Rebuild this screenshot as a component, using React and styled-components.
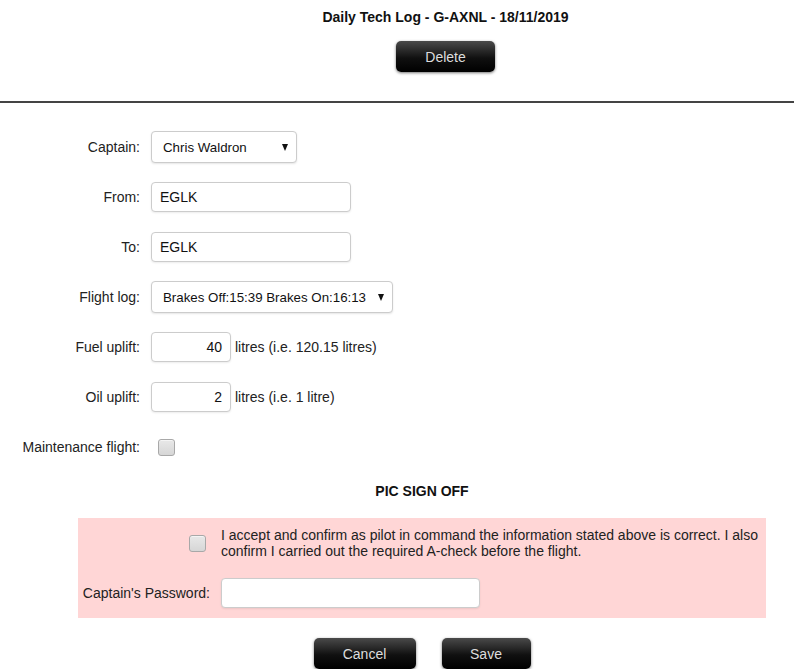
import React from 'react';
import styled, { createGlobalStyle } from 'styled-components';

const GlobalStyle = createGlobalStyle`
  body {
    margin: 0;
    background: #fff;
    font-family: "Liberation Sans", Arial, sans-serif;
    font-size: 14px;
    color: #222;
  }
`;

const Header = styled.div`
  padding: 10px 0 0 97px;
  display: flex;
  flex-direction: column;
  align-items: center;
  height: 103px;
  box-sizing: border-box;
  border-bottom: 2px solid #444;
`;

const Title = styled.h2`
  margin: 0;
  font-size: 14px;
  line-height: 15px;
  font-weight: bold;
  color: #111;
`;

const DarkButton = styled.button`
  width: ${(p) => p.$w}px;
  height: 31px;
  border: none;
  border-radius: 5px;
  background: linear-gradient(#4a4a4a, #101010 55%, #000);
  box-shadow: 0 1px 3px rgba(0, 0, 0, 0.55);
  color: #ddd;
  font-family: "Liberation Sans", Arial, sans-serif;
  font-size: 14px;
  padding: 0;
`;

const DeleteButton = styled(DarkButton)`
  margin-top: 16px;
`;

const Form = styled.div`
  padding-top: 19px;
`;

const Row = styled.div`
  display: grid;
  grid-template-columns: 140px auto;
  column-gap: 11px;
  align-items: center;
  height: 50px;
`;

const Label = styled.label`
  text-align: right;
  white-space: nowrap;
`;

const Field = styled.div`
  display: flex;
  align-items: center;
  gap: 4px;
`;

const TextInput = styled.div`
  width: ${(p) => p.$w}px;
  height: 30px;
  box-sizing: border-box;
  border: 1px solid #ccc;
  border-radius: 4px;
  background: #fff;
  box-shadow: 0 1px 2px rgba(0, 0, 0, 0.08);
  padding: 0 8px;
  display: flex;
  align-items: center;
  justify-content: ${(p) => (p.$right ? 'flex-end' : 'flex-start')};
  font-size: 14px;
  color: #111;
`;

const Select = styled.div`
  width: ${(p) => p.$w}px;
  height: 32px;
  box-sizing: border-box;
  border: 1px solid #ccc;
  border-radius: 4px;
  background: #fff;
  box-shadow: 0 1px 2px rgba(0, 0, 0, 0.1);
  padding: 0 8px 0 11px;
  display: flex;
  align-items: center;
  justify-content: space-between;
  font-size: 13.3px;
  color: #111;
`;

const Arrow = styled.span`
  width: 0;
  height: 0;
  border-left: 3.5px solid transparent;
  border-right: 3.5px solid transparent;
  border-top: 7px solid #111;
`;

const Check = styled.span`
  display: inline-block;
  width: 17px;
  height: 17px;
  box-sizing: border-box;
  border: 1px solid #a8a8a8;
  border-radius: 3px;
  background: linear-gradient(#e8e8e8, #d6d6d6);
  box-shadow: inset 0 1px 0 #f4f4f4;
`;

const CheckCell = styled.div`
  padding-left: 7px;
  display: flex;
  align-items: center;
`;

const Section = styled.div`
  margin: 0 28px 0 78px;
`;

const SectionTitle = styled.h3`
  margin: 11px 0 19px;
  text-align: center;
  font-size: 14px;
  line-height: 16px;
  font-weight: bold;
  color: #111;
`;

const SignBox = styled.div`
  background: #ffd6d6;
  padding: 9px 8px 10px 0;
  display: grid;
  grid-template-columns: 132px 1fr;
  column-gap: 11px;
  row-gap: 19px;
  align-items: center;
`;

const SignCheck = styled.div`
  display: flex;
  justify-content: flex-end;
  padding-right: 4px;
`;

const SignText = styled.div`
  line-height: 16px;
`;

const SignLabel = styled.label`
  text-align: right;
  white-space: nowrap;
`;

const Actions = styled.div`
  display: flex;
  justify-content: center;
  gap: 26px;
  margin-top: 20px;
`;

export default function App() {
  return (
    <>
      <GlobalStyle />
      <Header>
        <Title>Daily Tech Log - G-AXNL - 18/11/2019</Title>
        <DeleteButton $w={99}>Delete</DeleteButton>
      </Header>
      <Form>
        <Row>
          <Label>Captain:</Label>
          <Field>
            <Select $w={146}>
              <span>Chris Waldron</span>
              <Arrow />
            </Select>
          </Field>
        </Row>
        <Row>
          <Label>From:</Label>
          <Field>
            <TextInput $w={200}>EGLK</TextInput>
          </Field>
        </Row>
        <Row>
          <Label>To:</Label>
          <Field>
            <TextInput $w={200}>EGLK</TextInput>
          </Field>
        </Row>
        <Row>
          <Label>Flight log:</Label>
          <Field>
            <Select $w={242}>
              <span>Brakes Off:15:39 Brakes On:16:13</span>
              <Arrow />
            </Select>
          </Field>
        </Row>
        <Row>
          <Label>Fuel uplift:</Label>
          <Field>
            <TextInput $w={80} $right>40</TextInput>
            <span>litres (i.e. 120.15 litres)</span>
          </Field>
        </Row>
        <Row>
          <Label>Oil uplift:</Label>
          <Field>
            <TextInput $w={80} $right>2</TextInput>
            <span>litres (i.e. 1 litre)</span>
          </Field>
        </Row>
        <Row>
          <Label>Maintenance flight:</Label>
          <CheckCell>
            <Check />
          </CheckCell>
        </Row>
        <Section>
          <SectionTitle>PIC SIGN OFF</SectionTitle>
          <SignBox>
            <SignCheck>
              <Check />
            </SignCheck>
            <SignText>
              I accept and confirm as pilot in command the information stated above is correct. I also
              confirm I carried out the required A-check before the flight.
            </SignText>
            <SignLabel>Captain's Password:</SignLabel>
            <Field>
              <TextInput $w={259} />
            </Field>
          </SignBox>
          <Actions>
            <DarkButton $w={102}>Cancel</DarkButton>
            <DarkButton $w={89}>Save</DarkButton>
          </Actions>
        </Section>
      </Form>
    </>
  );
}
